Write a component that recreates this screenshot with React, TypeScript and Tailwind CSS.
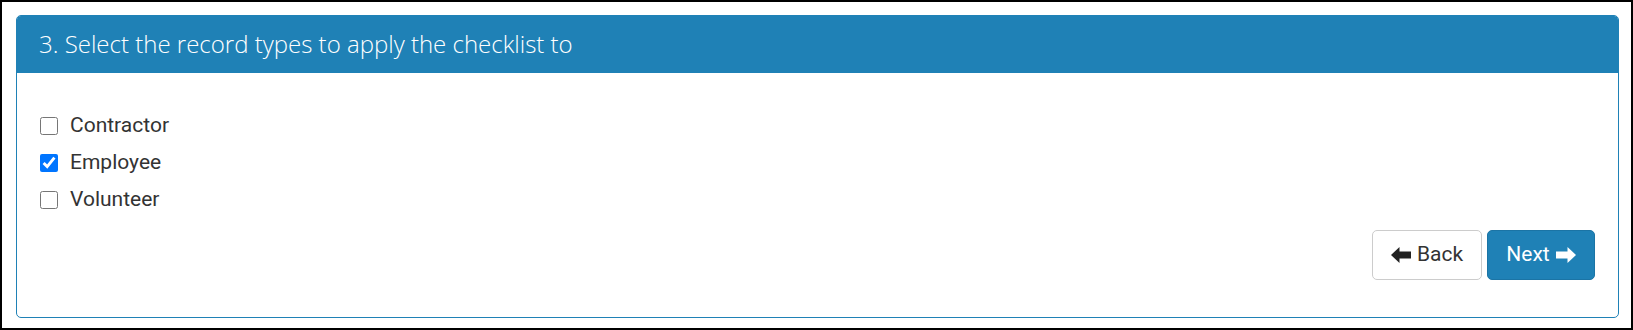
import { useState } from 'react';

const RECORD_TYPES = ['Contractor', 'Employee', 'Volunteer'];

function Arrow({ dir }: { dir: 'left' | 'right' }) {
  return (
    <svg
      viewBox="0 0 20 16"
      className={`h-[16px] w-[20px] ${dir === 'right' ? 'rotate-180' : ''}`}
      fill="currentColor"
    >
      <path d="M0 8 L8.5 0 L8.5 4.6 L20 4.6 L20 11.4 L8.5 11.4 L8.5 16 Z" />
    </svg>
  );
}

export default function App() {
  const [selected, setSelected] = useState<string[]>(['Employee']);

  const toggle = (t: string) =>
    setSelected((s) => (s.includes(t) ? s.filter((x) => x !== t) : [...s, t]));

  return (
    <div className="h-[330px] w-[1633px] border-2 border-black bg-white pl-[14px] pr-[12px] pt-[13px]">
      <div className="flex h-[303px] flex-col rounded-[5px] border border-[#1f81b6] bg-white">
        {/* Panel heading */}
        <div className="flex h-[57px] items-center rounded-t-[4px] bg-[#1f81b6] px-[22px] pb-[1px]">
          <h3 className="font-['Open_Sans',sans-serif] text-[24px] font-light text-white">
            3. Select the record types to apply the checklist to
          </h3>
        </div>

        <div className="flex flex-1 flex-col px-[23px] pt-[41px] font-['Roboto',sans-serif] text-[21px] text-[#333]">
          <div className="flex flex-col gap-[14px]">
            {RECORD_TYPES.map((t) => (
              <label key={t} className="flex h-[23px] items-center gap-[12px]">
                <input
                  type="checkbox"
                  checked={selected.includes(t)}
                  onChange={() => toggle(t)}
                  className="m-0 h-[18px] w-[18px]"
                />
                <span className="leading-none">{t}</span>
              </label>
            ))}
          </div>

          <div className="mt-[19px] flex justify-end gap-[5px]">
            <button className="flex h-[50px] w-[110px] items-center justify-center gap-[6px] rounded-[5px] border border-[#ccc] bg-white text-[21px] text-[#333]">
              <span className="text-[#222]">
                <Arrow dir="left" />
              </span>
              Back
            </button>
            <button className="flex h-[50px] w-[108px] items-center justify-center gap-[6px] rounded-[5px] border border-[#1b74a5] bg-[#1f81b6] text-[21px] text-white">
              Next
              <Arrow dir="right" />
            </button>
          </div>
        </div>
      </div>
    </div>
  );
}
